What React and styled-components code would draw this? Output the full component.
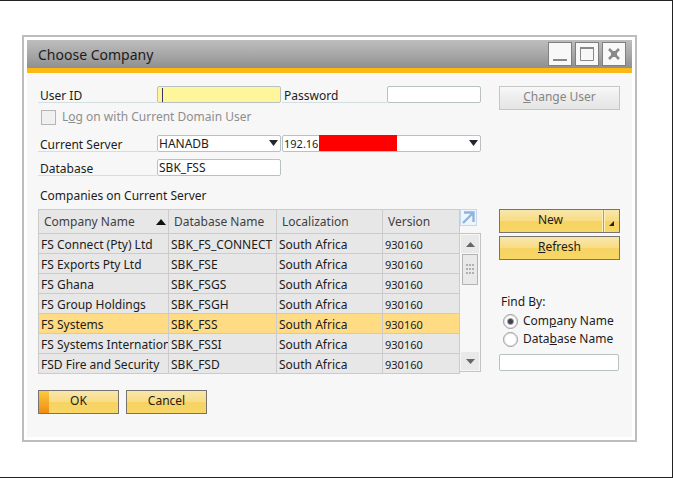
import React, { useState } from 'react';
import styled, { createGlobalStyle, css } from 'styled-components';

const GlobalStyle = createGlobalStyle`
  *, *::before, *::after { box-sizing: border-box; }
  html, body { margin: 0; background: #fff; }
  body, button, input, select {
    font-family: 'Noto Sans', 'Open Sans', sans-serif;
    font-size: 12px;
    line-height: 16px;
    color: #1c1c1c;
  }
`;

const Page = styled.main`
  min-height: 100vh;
  padding: 34px 35px 34px 22px;
  border: solid #222;
  border-width: 1px 1px 1px 0;
`;

const Dialog = styled.section`
  border: 2px solid #bdbdbd;
  padding: 3px;
  background: #fff;
`;

const TitleBar = styled.header`
  display: flex;
  align-items: center;
  height: 33px;
  padding: 0 6px 0 11px;
  border-bottom: 5px solid #fdb913;
  background: linear-gradient(#bdbdbd, #a8a8a8 50%, #8f8f8f);
`;

const Title = styled.h1`
  flex: 1;
  margin: 0;
  padding-top: 2px;
  font-size: 14px;
  line-height: 20px;
  font-weight: 400;
`;

const WindowControls = styled.div`
  display: flex;
  gap: 3px;
`;

const ControlButton = styled.button`
  display: flex;
  width: 24px;
  height: 24px;
  padding: 0;
  border: 1px solid #7f7f7f;
  background: #f8f8f8;
`;

const Body = styled.div`
  padding: 13px 12px 23px 11px;
  background: #f7f7f7;
`;

const Columns = styled.div`
  display: grid;
  grid-template-columns: minmax(0, 1fr) 121px;
  column-gap: 18px;
`;

const FormRow = styled.div`
  display: grid;
  grid-template-columns: 119px 124px minmax(0, 105fr) minmax(0, 94fr);
  height: 17px;
  margin-bottom: ${(p) => p.$gap || 0}px;
`;

const Label = styled.label`
  padding-left: 2px;
  margin-left: ${(p) => (p.$inset ? 1 : 0)}px;
  line-height: 20px;
  height: 17px;
  font-size: 12px;
  border-bottom: 1px solid #d5dede;
  white-space: nowrap;
`;

const FieldBox = styled.div`
  position: relative;
  display: flex;
  height: 17px;
  margin-left: ${(p) => (p.$inset ? 1 : 0)}px;
  ${(p) => p.$wide && css`grid-column: 3 / 5;`}
`;

const fieldLook = css`
  flex: 1;
  width: 100%;
  min-width: 0;
  height: 17px;
  margin: 0;
  padding: 0 1px;
  border: 1px solid #b9c2c2;
  border-radius: 2px;
  background: ${(p) => (p.$active ? '#fff59b' : '#fff')};
  font-size: ${(p) => (p.$small ? 11 : 12)}px;
  line-height: 15px;
  outline: none;
`;

const TextInput = styled.input`${fieldLook}`;

const Select = styled.select`
  ${fieldLook}
  appearance: none;
`;

const SelectArrow = styled.svg`
  position: absolute;
  top: 5px;
  right: 3px;
  pointer-events: none;
`;

const Caret = styled.span`
  position: absolute;
  top: 2px;
  left: 5px;
  width: 1px;
  height: 14px;
  background: #33336b;
`;

const Redaction = styled.span`
  position: absolute;
  top: 0;
  left: 37px;
  width: 78px;
  height: 16px;
  background: #f00;
`;

const CheckRow = styled.label`
  display: flex;
  align-items: center;
  gap: 6px;
  height: 32px;
  padding: 0 0 4px 3px;
  color: #8e8e8e;
`;

const CheckBox = styled.input`
  appearance: none;
  width: 15px;
  height: 15px;
  margin: 0;
  border: 1px solid #b5b5b5;
  background: #f0f0f0;
`;

const TableTitle = styled.h2`
  margin: 12px 0 5px;
  padding-left: 2px;
  font-size: 12px;
  line-height: 16px;
  font-weight: 400;
`;

const TableArea = styled.div`
  display: grid;
  grid-template-columns: minmax(0, 1fr) 21px;
  align-self: start;
`;

const Table = styled.table`
  width: 100%;
  border-collapse: collapse;
  table-layout: fixed;
`;

const Th = styled.th`
  width: ${(p) => (p.$width ? p.$width : 'auto')};
  height: 24px;
  padding: 0 2px 0 5px;
  border: 1px solid #cbcbcb;
  background: #e7e7e7;
  color: #3f3f3f;
  font-size: 12px;
  font-weight: 400;
  text-align: left;
  white-space: nowrap;
`;

const HeadCell = styled.div`
  display: flex;
  align-items: center;
  justify-content: space-between;
`;

const Row = styled.tr`
  background: ${(p) => (p.$selected ? '#ffdb83' : '#e7e7e7')};
`;

const Td = styled.td`
  height: 20px;
  padding: 2px 0 0 2px;
  border: 1px solid #cbcbcb;
  font-size: ${(p) => (p.$small ? 11 : 12)}px;
  line-height: 16px;
  white-space: nowrap;
  overflow: hidden;
`;

const Side = styled.div`
  display: flex;
  flex-direction: column;
  padding-bottom: 2px;
`;

const ExpandButton = styled.button`
  display: flex;
  width: 17px;
  height: 17px;
  margin: 0 0 7px;
  padding: 0;
  border: 1px solid #c4d8f2;
  background: #eef4fc;
`;

const ScrollTrack = styled.div`
  display: flex;
  flex-direction: column;
  flex: 1;
  padding: 1px;
  border: 1px solid #c4c4c4;
  border-left-width: 0;
  background: #f7f7f7;
`;

const ScrollButton = styled.button`
  display: flex;
  align-items: center;
  justify-content: center;
  height: 18px;
  padding: 0;
  border: 0;
  background: #e9e9e9;
`;

const ScrollThumb = styled.div`
  display: flex;
  align-items: center;
  justify-content: center;
  height: 31px;
  margin: 1px 1px auto;
  border: 1px solid #b3b3b3;
  background: #e9e9e9;
`;

const Button = styled.button`
  display: flex;
  align-items: center;
  justify-content: center;
  position: relative;
  width: ${(p) => p.$width || '100%'};
  height: 24px;
  padding: 0 0 2px;
  border: 1px solid #77736f;
  background: linear-gradient(#f7e7ae, #f9dc83 48%, #f6d364 52%, #f8d766);
  ${(p) => p.disabled && css`
    border-color: #c6c6c6;
    background: linear-gradient(#f8f8f8, #ededed 48%, #e5e5e5);
    color: #858585;
  `}
`;

const DefaultStripe = styled.span`
  position: absolute;
  inset: 0 auto 0 0;
  width: 10px;
  background: linear-gradient(#fccb3f, #f08c12);
`;

const SplitCorner = styled.span`
  position: absolute;
  inset: 0 0 0 auto;
  display: flex;
  width: 16px;
  border-left: 1px solid #b79c51;
  box-shadow: -1px 0 #fff2c0, inset 1px 0 #fff2c0;
`;

const NewLabel = styled.span`
  padding-right: 18px;
`;

const Actions = styled.div`
  display: flex;
  flex-direction: column;
  gap: 3px;
`;

const SideColumn = styled.div`
  display: flex;
  flex-direction: column;
  justify-content: space-between;
`;

const FindBy = styled.fieldset`
  margin: 20px 0 3px;
  padding: 0;
  border: 0;
`;

const FindLegend = styled.legend`
  padding: 0 0 0 2px;
  margin-bottom: 2px;
`;

const RadioRow = styled.label`
  display: flex;
  align-items: center;
  gap: 5px;
  height: 18px;
  padding-left: 4px;
  white-space: nowrap;
`;

const Radio = styled.input`
  appearance: none;
  width: 15px;
  height: 15px;
  flex: none;
  margin: 0;
  border: 1px solid #9b9b9f;
  border-radius: 50%;
  background: #fff;
  box-shadow: inset 0 0 0 1px #e2e2e4;
  &:checked {
    background: radial-gradient(circle, #41414f 0 2px, #fff 4px);
  }
`;

const SearchBox = styled.div`
  display: flex;
  margin: 6px 1px 0 0;
`;

const Footer = styled.footer`
  display: flex;
  gap: 7px;
  margin-top: 16px;
`;

const companies = [
  ['FS Connect (Pty) Ltd', 'SBK_FS_CONNECT'],
  ['FS Exports Pty Ltd', 'SBK_FSE'],
  ['FS Ghana', 'SBK_FSGS'],
  ['FS Group Holdings', 'SBK_FSGH'],
  ['FS Systems', 'SBK_FSS'],
  ['FS Systems International', 'SBK_FSSI'],
  ['FSD Fire and Security', 'SBK_FSD'],
];

function Triangle({ up, color = '#2b2b33', width = 9, height = 5 }) {
  return (
    <svg width={width} height={height} viewBox="0 0 10 6" preserveAspectRatio="none" aria-hidden="true">
      <path d={up ? 'M0 6 5 0l5 6z' : 'M0 0h10L5 6z'} fill={color} />
    </svg>
  );
}

function ComboArrow() {
  return (
    <SelectArrow width="9" height="6" viewBox="0 0 9 6" aria-hidden="true">
      <path d="M0 0h9L4.5 6z" fill="#25252d" />
    </SelectArrow>
  );
}

export default function App() {
  const [selected, setSelected] = useState('SBK_FSS');
  return (
    <Page>
      <GlobalStyle />
      <Dialog aria-labelledby="dialog-title">
        <TitleBar>
          <Title id="dialog-title">Choose Company</Title>
          <WindowControls>
            <ControlButton aria-label="Minimize">
              <svg width="22" height="22" viewBox="0 0 22 22"><path d="M4 17h14" stroke="#888" strokeWidth="2" /></svg>
            </ControlButton>
            <ControlButton aria-label="Maximize">
              <svg width="22" height="22" viewBox="0 0 22 22"><path d="M4.5 5.5h13v12h-13z" fill="none" stroke="#888" /><path d="M4 5h14" stroke="#888" strokeWidth="2" /></svg>
            </ControlButton>
            <ControlButton aria-label="Close">
              <svg width="22" height="22" viewBox="0 0 22 22"><path d="M6 6l10 10M16 6L6 16" stroke="#888" strokeWidth="2.6" /><path d="M8 8h6v6H8z" fill="#888" /></svg>
            </ControlButton>
          </WindowControls>
        </TitleBar>
        <Body>
          <Columns>
            <div>
              <FormRow>
                <Label htmlFor="user">User ID</Label>
                <FieldBox>
                  <TextInput id="user" $active />
                  <Caret />
                </FieldBox>
                <Label htmlFor="password" $inset>Password</Label>
                <FieldBox><TextInput id="password" type="password" /></FieldBox>
              </FormRow>
              <CheckRow>
                <CheckBox type="checkbox" disabled />
                <span>L<u>o</u>g on with Current Domain User</span>
              </CheckRow>
              <FormRow $gap={7}>
                <Label htmlFor="server">Current Server</Label>
                <FieldBox>
                  <Select id="server"><option>HANADB</option></Select>
                  <ComboArrow />
                </FieldBox>
                <FieldBox $wide $inset>
                  <Select $small aria-label="Server address"><option>192.16</option></Select>
                  <Redaction />
                  <ComboArrow />
                </FieldBox>
              </FormRow>
              <FormRow>
                <Label htmlFor="database">Database</Label>
                <FieldBox><TextInput id="database" defaultValue="SBK_FSS" /></FieldBox>
              </FormRow>
              <TableTitle>Companies on Current Server</TableTitle>
            </div>
            <div>
              <Button disabled><span><u>C</u>hange User</span></Button>
            </div>
            <TableArea>
              <Table>
                <thead>
                  <tr>
                    <Th $width="130px"><HeadCell>Company Name <Triangle up color="#111" width={10} height={6} /></HeadCell></Th>
                    <Th $width="108px">Database Name</Th>
                    <Th $width="106px">Localization</Th>
                    <Th>Version</Th>
                  </tr>
                </thead>
                <tbody>
                  {companies.map(([name, db]) => (
                    <Row key={db} $selected={db === selected} onClick={() => setSelected(db)}>
                      <Td>{name}</Td>
                      <Td>{db}</Td>
                      <Td>South Africa</Td>
                      <Td $small>930160</Td>
                    </Row>
                  ))}
                </tbody>
              </Table>
              <Side>
                <ExpandButton aria-label="Expand table">
                  <svg width="15" height="15" viewBox="0 0 15 15"><path d="M2 13 11 4M3 2.5h9.5v9.5" fill="none" stroke="#8fb5dc" strokeWidth="2.4" /></svg>
                </ExpandButton>
                <ScrollTrack>
                  <ScrollButton aria-label="Scroll up"><Triangle up color="#666" /></ScrollButton>
                  <ScrollThumb>
                    <svg width="8" height="11" viewBox="0 0 8 11"><path d="M0 1h2M3 1h2M6 1h2M0 5h2M3 5h2M6 5h2M0 9h2M3 9h2M6 9h2" stroke="#b0b0b0" strokeWidth="2" /></svg>
                  </ScrollThumb>
                  <ScrollButton aria-label="Scroll down"><Triangle color="#666" /></ScrollButton>
                </ScrollTrack>
              </Side>
            </TableArea>
            <SideColumn>
              <Actions>
                <Button>
                  <NewLabel>New</NewLabel>
                  <SplitCorner>
                    <svg width="14" height="22" viewBox="0 0 14 22"><path d="M10 11v5H5z" fill="#222" /></svg>
                  </SplitCorner>
                </Button>
                <Button><span><u>R</u>efresh</span></Button>
              </Actions>
              <FindBy>
                <FindLegend>Find By:</FindLegend>
                <RadioRow><Radio type="radio" name="find" defaultChecked /><span>Com<u>p</u>any Name</span></RadioRow>
                <RadioRow><Radio type="radio" name="find" /><span>Data<u>b</u>ase Name</span></RadioRow>
                <SearchBox><TextInput aria-label="Find" /></SearchBox>
              </FindBy>
            </SideColumn>
          </Columns>
          <Footer>
            <Button $width="81px"><DefaultStripe />OK</Button>
            <Button $width="81px">Cancel</Button>
          </Footer>
        </Body>
      </Dialog>
    </Page>
  );
}
